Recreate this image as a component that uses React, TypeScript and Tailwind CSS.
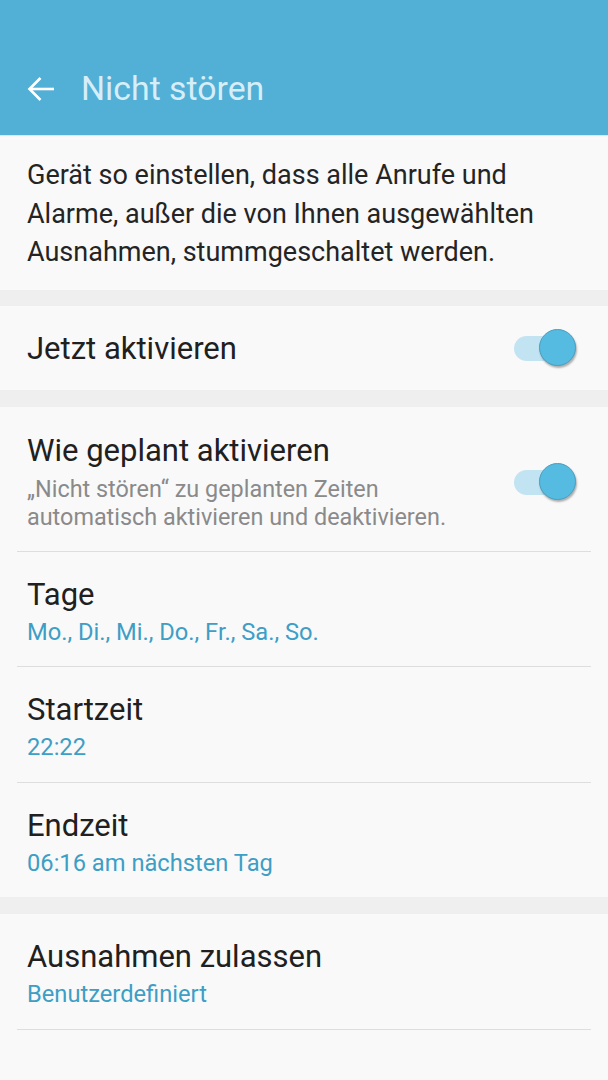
import React from "react";

function Toggle() {
  return (
    <div className="relative w-[66px] h-[40px] shrink-0">
      <div className="absolute left-[2px] top-[8px] w-[48px] h-[25px] rounded-full bg-[#c2e4f2]" />
      <div className="absolute left-[27px] top-[1px] w-[37px] h-[37px] rounded-full bg-[#55bbe1] border border-[#4a9fc0] shadow-[1px_2px_2px_rgba(0,0,0,0.3)]" />
    </div>
  );
}

function Row({ title, sub, divider = true }: { title: string; sub: string; divider?: boolean }) {
  return (
    <div>
      <div className="px-[27px] pt-[25px] pb-[15.5px]">
        <div className="text-[31px] leading-[36px] text-[#202020]">{title}</div>
        <div className="text-[23.7px] leading-[38px] text-[#3d9ec6]">{sub}</div>
      </div>
      {divider && <div className="mx-[17px] h-px bg-[#dedede]" />}
    </div>
  );
}

export default function App() {
  return (
    <div className="w-[608px] h-[1080px] bg-[#f9f9f9] overflow-hidden" style={{ fontFamily: "Roboto, 'Noto Sans', sans-serif" }}>
      {/* App bar */}
      <div className="h-[135px] bg-[#52afd6] flex items-end pb-[26px] shadow-[0_1px_1px_rgba(0,0,0,0.08)]">
        <div className="pl-[27px] pr-[26px] flex items-center h-[40px]">
          <svg width="28" height="26" viewBox="0 0 28 26" fill="none" stroke="#ffffff" strokeWidth="2.6">
            <path d="M27 13H3" />
            <path d="M13.5 2L2.5 13l11 11" />
          </svg>
        </div>
        <div className="text-[33.8px] leading-[40px] text-[#d6eef8]">Nicht stören</div>
      </div>

      {/* Description */}
      <div className="px-[27px] pt-[21px] pb-[18px] text-[27px] leading-[38.5px] text-[#242424]">
        Gerät so einstellen, dass alle Anrufe und Alarme, außer die von Ihnen ausgewählten Ausnahmen, stummgeschaltet werden.
      </div>

      <div className="h-[16px] bg-[#efefef]" />

      {/* Jetzt aktivieren */}
      <div className="h-[84px] flex items-center justify-between pl-[27px] pr-[30px]">
        <div className="pt-[4px] text-[31px] text-[#202020]">Jetzt aktivieren</div>
        <Toggle />
      </div>

      <div className="h-[17px] bg-[#efefef]" />

      {/* Scheduled */}
      <div>
        <div className="flex items-center justify-between pl-[27px] pr-[30px] pt-[26px] pb-[20px]">
          <div>
            <div className="text-[31px] leading-[36px] text-[#202020]">Wie geplant aktivieren</div>
            <div className="mt-[6px] text-[23.4px] leading-[28px] text-[#8a8a8a]">
              „Nicht stören“ zu geplanten Zeiten
              <br />
              automatisch aktivieren und deaktivieren.
            </div>
          </div>
          <Toggle />
        </div>
        <div className="mx-[17px] h-px bg-[#dedede]" />
        <Row title="Tage" sub="Mo., Di., Mi., Do., Fr., Sa., So." />
        <Row title="Startzeit" sub="22:22" />
        <Row title="Endzeit" sub="06:16 am nächsten Tag" divider={false} />
      </div>

      <div className="h-[17px] bg-[#efefef]" />

      <Row title="Ausnahmen zulassen" sub="Benutzerdefiniert" />
    </div>
  );
}
